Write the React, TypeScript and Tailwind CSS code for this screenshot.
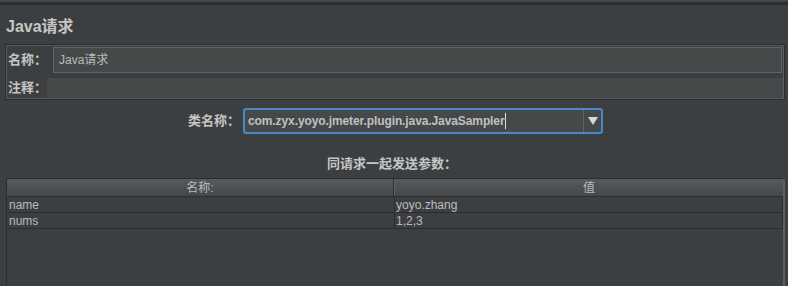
import React from "react";

const font = { fontFamily: '"Liberation Sans", "Noto Sans CJK SC", sans-serif' };

export default function App() {
  return (
    <div
      className="w-[788px] h-[286px] bg-[#3c3f41] overflow-hidden flex flex-col text-[#bbbbbb]"
      style={font}
    >
      <div className="h-[2px] shrink-0 bg-[#45484a]" />
      <div className="h-[3px] shrink-0 bg-[#2b2e30]" />
      <div className="h-[39px] shrink-0 pl-[6px] pt-[5px] flex items-center text-[16px] font-bold text-[#c6c6c6]">
        Java请求
      </div>

      {/* name/comment panel */}
      <div className="mx-[5px] mr-[3px] shrink-0 border border-[#2b2d2f]">
        <div className="border border-[#55595b] border-r-[#5c6062]">
          <div className="flex items-center h-[28px]">
            <span className="w-[46px] pl-[1px] text-[13px] font-bold text-[#c6c6c6]">名称：</span>
            <div className="flex-1 h-[26px] bg-[#45494a] border border-[#5f6364] flex items-center pl-[5px] text-[12px] text-[#bbbbbb] mr-[1px]">
              Java请求
            </div>
          </div>
          <div className="h-[4px]" />
          <div className="flex items-center h-[20px]">
            <span className="w-[40px] pl-[1px] text-[13px] font-bold text-[#c6c6c6]">注释：</span>
            <div className="flex-1 h-[20px] bg-[#45494a]" />
          </div>
        </div>
      </div>

      {/* class name row */}
      <div className="shrink-0 flex items-center pt-[8px] h-[34px]">
        <span className="w-[243px] pr-[3px] text-right text-[13px] font-bold text-[#c6c6c6]">类名称：</span>
        <div className="w-[360px] h-[26px] rounded-[3px] border-2 border-[#4b88c5] bg-[#45494a] flex items-stretch">
          <div className="flex-1 flex items-center pl-[3px] text-[12px] font-bold text-[#c0c0c0] tracking-[-0.1px]">
            <span>com.zyx.yoyo.jmeter.plugin.java.JavaSampler</span>
            <span className="w-[1px] h-[16px] bg-[#dddddd] ml-[1px]" />
          </div>
          <div className="w-[18px] border-l border-[#5f6364] flex items-center justify-center">
            <svg width="10" height="8" viewBox="0 0 10 8">
              <polygon points="0,0 10,0 5,8" fill="#d8d8d8" />
            </svg>
          </div>
        </div>
      </div>

      <div className="shrink-0 h-[44px] pt-[16px] pr-[4px] flex items-center justify-center text-[13px] font-bold text-[#c6c6c6]">
        同请求一起发送参数：
      </div>

      {/* table */}
      <div className="flex-1 ml-[6px] mr-[3px] flex border-t border-[#2b2d2f]">
        <div className="flex-1 flex flex-col border-l border-[#2b2d2f]">
          <div className="flex h-[18px] bg-gradient-to-b from-[#555a5c] to-[#44484a] border-b border-[#2b2d2f] text-[12px] text-[#bbbbbb]">
            <div className="w-[387px] flex items-center justify-center border-r border-[#2b2d2f]">名称:</div>
            <div className="flex-1 flex items-center justify-center border-l border-[#5f6466]">值</div>
          </div>
          {[
            ["name", "yoyo.zhang"],
            ["nums", "1,2,3"],
          ].map(([k, v]) => (
            <div key={k} className="flex h-[16px] border-b border-[#2b2d2f] text-[12px] text-[#bbbbbb]">
              <div className="w-[388px] pl-[2px] flex items-center border-r border-[#2b2d2f]">{k}</div>
              <div className="flex-1 pl-[1px] flex items-center border-r border-[#2b2d2f]">{v}</div>
            </div>
          ))}
        </div>
        <div className="w-[2px] bg-[#5c6062]" />
      </div>
    </div>
  );
}
